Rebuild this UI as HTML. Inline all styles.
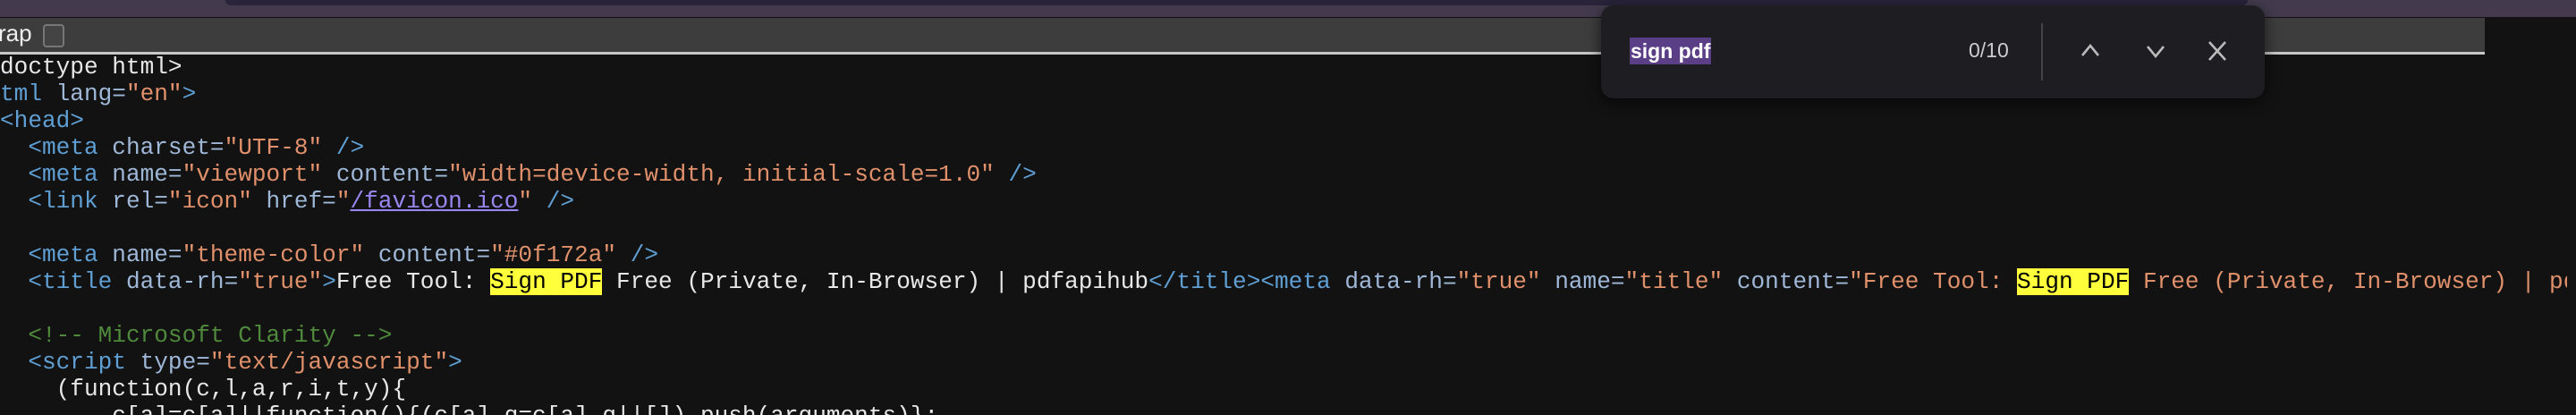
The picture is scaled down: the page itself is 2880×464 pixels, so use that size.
<!DOCTYPE html>
<html><head><style>
body{margin:0;width:2880px;height:464px;background:#121212;overflow:hidden;position:relative;font-family:"Liberation Mono",monospace}
.top{position:absolute;left:0;top:0;width:2880px;height:19px;background:#433b4d}
.topd{position:absolute;left:252px;top:0;width:2261px;height:6px;background:#29243a;border-radius:0 0 10px 10px}
.tool{position:absolute;left:0;top:20px;width:2778px;height:38px;background:#3d3d3d;border-bottom:3px solid #c8c8c8}
.tool span{position:absolute;left:-2px;top:2px;font:26px "Liberation Sans",sans-serif;color:#eee}
.cb{position:absolute;left:48px;top:7px;width:20px;height:22px;border:2px solid #777;border-radius:4px;background:#444}
.code{position:absolute;left:0;top:60px;width:2870px;height:404px;overflow:hidden;font-size:26.1px;line-height:30px;color:#e8e8e8;white-space:pre}
.t{color:#5f9fd3}.a{color:#9fb8d8}.s{color:#e0906a}.c{color:#4f8a3c}.h{background:#ffff3c;color:#000}
.u{color:#9a86f0;text-decoration:underline}
.find{position:absolute;left:1790px;top:6px;width:742px;height:104px;background:#1e1d22;border-radius:14px;box-shadow:0 4px 16px rgba(0,0,0,.6);font-family:"Liberation Sans",sans-serif}
.q{position:absolute;left:32px;top:36px;height:30px;padding:0 1px;background:#5a3f86;color:#fff;font-size:23px;font-weight:bold;line-height:30px}
.n{position:absolute;left:411px;top:37px;color:#ccc;font-size:23px}
.dv{position:absolute;left:492px;top:20px;width:2px;height:64px;background:#444}
svg{position:absolute}
</style></head><body>
<div class="top"></div><div class="topd"></div>
<div class="tool"><span>rap</span><div class="cb"></div></div>
<div class="code"><div>doctype html&gt;</div><div><span class="t">tml </span><span class="a">lang=</span><span class="s">"en"</span><span class="t">&gt;</span></div><div><span class="t">&lt;head&gt;</span></div><div>  <span class="t">&lt;meta </span><span class="a">charset=</span><span class="s">"UTF-8"</span> <span class="t">/&gt;</span></div><div>  <span class="t">&lt;meta </span><span class="a">name=</span><span class="s">"viewport"</span> <span class="a">content=</span><span class="s">"width=device-width, initial-scale=1.0"</span> <span class="t">/&gt;</span></div><div>  <span class="t">&lt;link </span><span class="a">rel=</span><span class="s">"icon"</span> <span class="a">href=</span><span class="s">"</span><span class="u">/favicon.ico</span><span class="s">"</span> <span class="t">/&gt;</span></div><div> </div><div>  <span class="t">&lt;meta </span><span class="a">name=</span><span class="s">"theme-color"</span> <span class="a">content=</span><span class="s">"#0f172a"</span> <span class="t">/&gt;</span></div><div>  <span class="t">&lt;title </span><span class="a">data-rh=</span><span class="s">"true"</span><span class="t">&gt;</span>Free Tool: <span class="h">Sign PDF</span> Free (Private, In-Browser) | pdfapihub<span class="t">&lt;/title&gt;&lt;meta </span><span class="a">data-rh=</span><span class="s">"true"</span> <span class="a">name=</span><span class="s">"title"</span> <span class="a">content=</span><span class="s">"Free Tool: </span><span class="h">Sign PDF</span><span class="s"> Free (Private, In-Browser) | pdfapihub"</span></div><div> </div><div>  <span class="c">&lt;!-- Microsoft Clarity --&gt;</span></div><div>  <span class="t">&lt;script </span><span class="a">type=</span><span class="s">"text/javascript"</span><span class="t">&gt;</span></div><div>    (function(c,l,a,r,i,t,y){</div><div>        c[a]=c[a]||function(){(c[a].q=c[a].q||[]).push(arguments)};</div></div>
<div class="find"><span class="q">sign pdf</span><span class="n">0/10</span><div class="dv"></div>
<svg style="left:534px;top:38px" width="26" height="26" viewBox="0 0 26 26"><path d="M4 18L13 7L22 18" stroke="#bbb" stroke-width="2.6" fill="none"/></svg>
<svg style="left:607px;top:38px" width="26" height="26" viewBox="0 0 26 26"><path d="M4 8L13 19L22 8" stroke="#bbb" stroke-width="2.6" fill="none"/></svg>
<svg style="left:676px;top:38px" width="26" height="26" viewBox="0 0 26 26"><path d="M4 3L22 23M22 3L4 23" stroke="#bbb" stroke-width="2.6" fill="none"/></svg>
</div>
</body></html>
